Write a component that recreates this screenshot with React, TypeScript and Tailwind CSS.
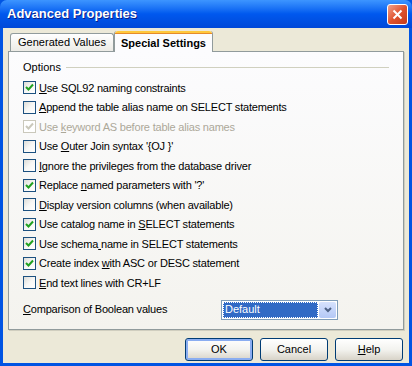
import React from 'react';

const font = { fontFamily: '"Liberation Sans", Arial, sans-serif' };

const Label = ({ text, at }: { text: string; at: number }) => (
  <>
    {text.slice(0, at)}
    <span className="underline underline-offset-[1px]">{text[at]}</span>
    {text.slice(at + 1)}
  </>
);

const Check = ({ checked, disabled }: { checked?: boolean; disabled?: boolean }) => (
  <span
    className={`flex h-[13px] w-[13px] shrink-0 items-center justify-center border ${
      disabled ? 'border-[#cac8bb] bg-white' : 'border-[#1c5180] bg-gradient-to-br from-[#dcdcd7] via-[#f7f7f5] to-white'
    }`}
  >
    {checked && (
      <svg width="9" height="9" viewBox="0 0 9 9">
        <path
          d="M1 4 L3.5 6.5 L8 1.5"
          fill="none"
          stroke={disabled ? '#cac8bb' : '#21a121'}
          strokeWidth="2"
        />
      </svg>
    )}
  </span>
);

const options: { text: string; at: number; checked?: boolean; disabled?: boolean }[] = [
  { text: 'Use SQL92 naming constraints', at: 0, checked: true },
  { text: 'Append the table alias name on SELECT statements', at: 0 },
  { text: 'Use keyword AS before table alias names', at: 4, checked: true, disabled: true },
  { text: "Use Outer Join syntax '{OJ }'", at: 4 },
  { text: 'Ignore the privileges from the database driver', at: 0 },
  { text: "Replace named parameters with '?'", at: 8, checked: true },
  { text: 'Display version columns (when available)', at: 0 },
  { text: 'Use catalog name in SELECT statements', at: 20, checked: true },
  { text: 'Use schema name in SELECT statements', at: 10, checked: true },
  { text: 'Create index with ASC or DESC statement', at: 13, checked: true },
  { text: 'End text lines with CR+LF', at: 0 },
];

const Button = ({ children, focused }: { children: React.ReactNode; focused?: boolean }) => (
  <button
    className={`h-[23px] w-[68px] rounded-[3px] border border-[#003c74] bg-gradient-to-b from-white via-[#f3f3ef] to-[#d8d3c8] text-[11px] text-black ${
      focused ? 'shadow-[inset_0_0_0_2px_#8aadf1]' : ''
    }`}
    style={font}
  >
    {children}
  </button>
);

export default function App() {
  return (
    <div className="flex h-[366px] w-[412px] flex-col overflow-hidden bg-[#0054e3]" style={font}>
      {/* Title bar */}
      <div className="flex h-[28px] shrink-0 items-center justify-between rounded-t-[7px] bg-gradient-to-b from-[#3d95ff] via-[#0058ee] to-[#0048d8] pl-[7px] pr-[4px]">
        <span className="text-[13px] font-bold text-white [text-shadow:1px_1px_#0a1e8a]">Advanced Properties</span>
        <span className="flex h-[21px] w-[21px] items-center justify-center rounded-[3px] border border-white bg-gradient-to-br from-[#f0a08a] via-[#e0532e] to-[#c43a18]">
          <svg width="11" height="11" viewBox="0 0 11 11">
            <path d="M1.5 1.5 L9.5 9.5 M9.5 1.5 L1.5 9.5" stroke="white" strokeWidth="2" />
          </svg>
        </span>
      </div>

      {/* Client area */}
      <div className="mx-[3px] mb-[3px] flex flex-1 flex-col bg-[#ece9d8] px-[5px] pt-[2px]">
        {/* Tabs */}
        <div className="relative z-10 flex h-[21px] items-end pl-[2px]">
          <div className="flex h-[18px] w-[104px] items-center justify-center rounded-t-[3px] border border-b-0 border-[#919b9c] bg-gradient-to-b from-white to-[#ecebe6] text-[11px] text-black">
            Generated Values
          </div>
          <div className="-mb-px flex h-[21px] w-[99px] flex-col rounded-t-[3px] border-x border-[#919b9c] bg-[#fcfcfe]">
            <div className="h-[3px] rounded-t-[3px] bg-[#ffc83c] shadow-[inset_0_-1px_#e68b2c]" />
            <div className="flex flex-1 items-center justify-center text-[11px] font-bold text-black">Special Settings</div>
          </div>
        </div>

        {/* Panel */}
        <div className="flex h-[279px] flex-col border border-[#919b9c] bg-gradient-to-b from-[#fcfcfe] to-[#f4f3ee] px-[14px] pt-[9px] shadow-[1px_1px_#d0cebf]">
          <div className="flex h-[13px] items-center gap-[5px] text-[11px] text-black">
            <span>Options</span>
            <span className="h-px flex-1 bg-[#d0d0bf]" />
          </div>
          <div className="mt-[4px] flex flex-col">
            {options.map((o) => (
              <div key={o.text} className="flex h-[19.5px] items-center gap-[3px]">
                <Check checked={o.checked} disabled={o.disabled} />
                <span className={`text-[11px] tracking-[-0.2px] ${o.disabled ? 'text-[#aca899]' : 'text-black'}`}>
                  <Label text={o.text} at={o.at} />
                </span>
              </div>
            ))}
          </div>
          <div className="mt-[7px] flex items-center">
            <span className="w-[198px] text-[11px] tracking-[-0.2px] text-black">
              <Label text="Comparison of Boolean values" at={0} />
            </span>
            <div className="flex h-[20px] w-[117px] items-center border border-[#7f9db9] bg-white p-px">
              <span className="flex h-full flex-1 items-center bg-[#316ac5] pl-[2px] text-[11px] text-white outline-1 outline-dotted outline-offset-[-1px] outline-[#fff]">
                Default
              </span>
              <span className="ml-px flex h-full w-[17px] items-center justify-center rounded-[2px] bg-gradient-to-b from-[#d6e2fd] to-[#b4c8f6]">
                <svg width="8" height="6" viewBox="0 0 8 6">
                  <path d="M1 1 L4 4 L7 1" fill="none" stroke="#4d6185" strokeWidth="2" />
                </svg>
              </span>
            </div>
          </div>
        </div>

        {/* Buttons */}
        <div className="mt-[8px] flex justify-end gap-[7px] pr-[1px]">
          <Button focused>OK</Button>
          <Button>Cancel</Button>
          <Button>
            <Label text="Help" at={0} />
          </Button>
        </div>
      </div>
    </div>
  );
}
